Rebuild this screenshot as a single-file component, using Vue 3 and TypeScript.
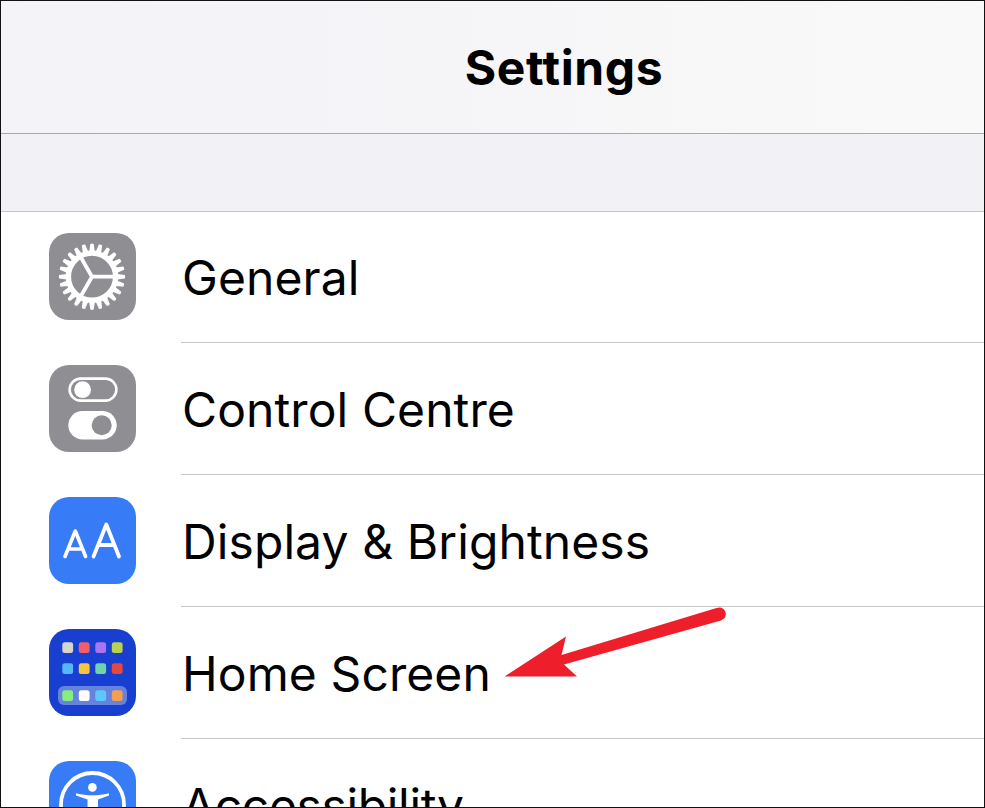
<script setup lang="ts">
interface Row { key: string; label: string }
const rows: Row[] = [
  { key: 'general', label: 'General' },
  { key: 'control', label: 'Control Centre' },
  { key: 'display', label: 'Display & Brightness' },
  { key: 'home', label: 'Home Screen' },
  { key: 'access', label: 'Accessibility' },
]
const teeth = Array.from({ length: 24 }, (_, i) => i * 15)
const appRows = [
  ['#d6d5cc', '#ee5f6b', '#ac74f0', '#b9d14f'],
  ['#56b8f8', '#f8c53c', '#6dd5a8', '#e8473c'],
]
const dock = ['#86ee7c', '#ffffff', '#5cc8fa', '#f39f50']
</script>

<template>
  <div class="screen">
    <header class="nav"><h1>Settings</h1></header>
    <div class="band"></div>
    <ul class="list">
      <li v-for="r in rows" :key="r.key" class="row">
        <div class="icon" :class="'icon-' + r.key">
          <svg v-if="r.key === 'general'" viewBox="0 0 87 87" width="87" height="87">
            <g fill="#fff">
              <path v-for="a in teeth" :key="a" d="M40 20L41.3 10.9Q43 10.1 44.7 10.9L46 20Z" :transform="`rotate(${a} 43 43.7)`" />
            </g>
            <circle cx="43" cy="43.7" r="23.6" fill="none" stroke="#fff" stroke-width="5.4" />
            <path d="M43 43.7H66M43 43.7L31.5 23.7M43 43.7L31.5 63.7" fill="none" stroke="#fff" stroke-width="3.8" />
          </svg>
          <svg v-else-if="r.key === 'control'" viewBox="0 0 87 87" width="87" height="87">
            <rect x="20.6" y="13.6" width="46.8" height="22" rx="11" fill="none" stroke="#fff" stroke-width="2.6" />
            <circle cx="33.6" cy="24.7" r="8.4" fill="#fff" />
            <rect x="19.3" y="46" width="48.4" height="28.4" rx="14.2" fill="#fff" />
            <circle cx="52.7" cy="60.2" r="10" fill="#8e8e93" />
          </svg>
          <svg v-else-if="r.key === 'display'" viewBox="0 0 87 87" width="87" height="87">
            <path d="M16 59.5L26.3 34L36.6 59.5M19.5 52H33" fill="none" stroke="#fff" stroke-width="3.6" stroke-linecap="round" stroke-linejoin="round" />
            <path d="M44.5 59.5L57.3 27.5L70 59.5M49 48H65.5" fill="none" stroke="#fff" stroke-width="3.8" stroke-linecap="round" stroke-linejoin="round" />
          </svg>
          <svg v-else-if="r.key === 'home'" viewBox="0 0 87 87" width="87" height="87">
            <rect x="9" y="57" width="69" height="19" rx="6" fill="#6482de" />
            <g v-for="(colors, y) in appRows" :key="y">
              <rect v-for="(c, x) in colors" :key="c" :x="13.3 + x * 16.5" :y="13.3 + y * 21" width="10.8" height="10.8" rx="2.5" :fill="c" />
            </g>
            <rect v-for="(c, x) in dock" :key="c" :x="13.3 + x * 16.5" y="61.3" width="10.8" height="10.8" rx="2.5" :fill="c" />
          </svg>
          <svg v-else viewBox="0 0 87 87" width="87" height="87">
            <circle cx="43.5" cy="43.5" r="31.5" fill="none" stroke="#fff" stroke-width="3.8" />
            <circle cx="43.4" cy="26.4" r="4.3" fill="#fff" />
            <path d="M27 32.2C33 33.6 38 34.2 43.5 34.2S54 33.6 60 32.2L60 34.5L49 38.5V70H38.5V38.5L27 34.5Z" fill="#fff" />
          </svg>
        </div>
        <div class="cell"><span class="label" :class="'label-' + r.key">{{ r.label }}</span></div>
      </li>
    </ul>
    <svg class="arrow" viewBox="0 0 250 100" width="250" height="100">
      <path d="M14.5 81.5H87L74 69.5L231 25.5Q237 23 235.5 17Q233 11 226.5 13L71.5 60L76 41.5Z" fill="#ee1f2a" />
    </svg>
  </div>
</template>

<style>
html, body { margin: 0; padding: 0; background: #fff; }
</style>

<style scoped>
.screen {
  position: relative;
  width: 985px;
  height: 808px;
  box-sizing: border-box;
  overflow: hidden;
  border: 1px solid #111;
  background: #fff;
  font-family: Inter, "Liberation Sans", sans-serif;
  color: #000;
}
.nav {
  height: 132px;
  display: flex;
  align-items: center;
  justify-content: center;
  background: linear-gradient(90deg, #f4f3f8 0%, #f5f5f8 40%, #f8f8f8 75%, #f9f9f9 100%);
  border-bottom: 1px solid #a9a9ac;
  padding-left: 143px;
}
.nav h1 {
  margin: 0;
  font-size: 48px;
  line-height: 1;
  font-weight: 700;
  letter-spacing: 0.6px;
  position: relative;
  top: 1px;
}
.band {
  height: 77px;
  background: #f2f2f6;
  border-bottom: 1px solid #c6c6c8;
}
.list {
  margin: 0;
  padding: 0;
  list-style: none;
}
.row {
  display: flex;
  height: 132px;
  padding-left: 48px;
  gap: 45px;
}
.icon {
  flex: none;
  width: 87px;
  height: 87px;
  margin-top: 21px;
  border-radius: 20px;
  overflow: hidden;
}
.icon svg { display: block; }
.icon-general, .icon-control { background: #8e8e93; }
.icon-display, .icon-access { background: #377cf6; }
.icon-home { background: #193fd0; }
.cell {
  flex: 1;
  border-bottom: 1px solid #c6c6c8;
  display: flex;
  align-items: center;
  box-sizing: border-box;
  height: 131px;
  padding-left: 1px;
}
.label {
  font-size: 48px;
  font-weight: 400;
  letter-spacing: 0.1px;
  line-height: 1;
  white-space: nowrap;
  position: relative;
  top: 1px;
}
.label-access { letter-spacing: -0.35px; }
.arrow {
  position: absolute;
  left: 489px;
  top: 594px;
}
</style>
